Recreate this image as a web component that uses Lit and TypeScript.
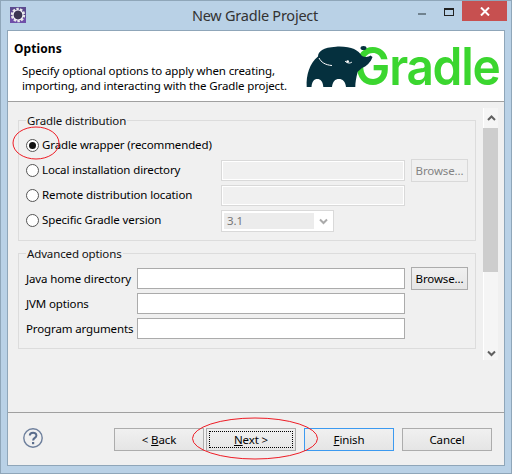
import { LitElement, html, css, svg } from "lit";
import { customElement } from "lit/decorators.js";

@customElement("app-root")
export class AppRoot extends LitElement {
  static styles = css`
    :host { display: block; width: 512px; height: 474px; font-family: "Noto Sans", "Open Sans", sans-serif; font-size: 11.5px; letter-spacing: -0.13px; color: #000; }
    * { box-sizing: border-box; }
    .window { position: relative; width: 512px; height: 474px; background: #b9d1e6; border: 1px solid #8fa6b9; padding: 0 6px 7px; display: flex; flex-direction: column; }
    .titlebar { height: 29px; flex: none; display: flex; align-items: flex-start; position: relative; }
    .appicon { width: 16px; height: 16px; margin: 6px 0 0 3px; flex: none; }
    .title { position: absolute; left: 0; right: 2px; top: 4px; text-align: center; font-size: 14.5px; line-height: 20px; color: #333; letter-spacing: -0.24px; }
    .controls { margin-left: auto; display: flex; align-items: flex-start; margin-right: -2px; }
    .min { width: 8px; height: 2px; background: #70828f; margin: 12px 18px 0 0; }
    .max { width: 10px; height: 8px; border: 1px solid #222; border-top-width: 2px; margin: 7px 8px 0 0; }
    .close { width: 45px; height: 20px; background: #c75050; display: flex; align-items: center; justify-content: center; }
    .client { flex: 1; min-height: 0; background: #f0f0f0; border: 1px solid #8fa6b9; display: flex; flex-direction: column; }
    .header { height: 71px; flex: none; background: #fff; border-bottom: 1px solid #a0a0a0; display: flex; justify-content: space-between; }
    .htext { padding: 9px 0 0 6px; }
    .htitle { font-weight: 700; line-height: 17px; font-size: 12px; letter-spacing: 0.1px; }
    .hdesc { margin: 6px 0 0 8px; line-height: 15px; white-space: nowrap; }
    .logo { position: relative; width: 200px; flex: none; }
    .elephant { position: absolute; left: 0; top: 0; width: 200px; height: 70px; }
    .gradle { position: absolute; right: 5px; top: 6px; font-family: "Inter", sans-serif; font-weight: 600; font-size: 52px; line-height: 60px; letter-spacing: -1.4px; color: #3bd62f; transform: scaleX(0.92); transform-origin: right center; }
    .main { flex: 1; min-height: 0; display: flex; }
    .content { flex: 1; padding: 11px 7px 0 10px; }
    fieldset { margin: 0 0 5px; padding: 5px 7px 7px; border: 1px solid #dcdcdc; min-width: 0; }
    legend { padding: 0 1px; line-height: 15px; color: #111; }
    .grid { display: grid; grid-auto-rows: 25px; align-items: center; }
    .g1 { grid-template-columns: 195px 184px 6px 57px; }
    .g2 { grid-template-columns: 111px 268px 6px 57px; }
    .radio { display: flex; align-items: center; gap: 3px; grid-column: 1; white-space: nowrap; }
    .radio .t { margin-bottom: 2px; }
    .dot { width: 13px; height: 13px; border-radius: 50%; border: 1px solid #555; background: #fff; display: flex; align-items: center; justify-content: center; flex: none; }
    .dot.on i { width: 7px; height: 7px; border-radius: 50%; background: #111; }
    .dis { height: 21px; border: 1px solid #d9d9d9; box-shadow: inset 0 0 0 1px #fff; background: #f0f0f0; }
    .en { height: 21px; border: 1px solid #ababab; background: #fff; }
    .label { white-space: nowrap; }
    .combo { grid-column: 2; width: 113px; height: 22px; border: 1px solid #d9d9d9; background: #fff; padding: 2px; display: flex; }
    .combo span { width: 90px; background: #ececec; color: #777; padding-left: 3px; line-height: 16px; }
    .combo svg { margin: 5px 0 0 5px; }
    .btn { height: 23px; border: 1px solid #acacac; background: linear-gradient(#f0f0f0, #e5e5e5); display: flex; align-items: center; justify-content: center; line-height: 15px; position: relative; white-space: pre; }
    .btn.off { background: #f0f0f0; border-color: #d9d9d9; color: #838383; }
    .scroll { width: 15px; height: 252px; margin: 6px 6px 0 0; flex: none; background: #f5f5f5; border-left: 1px solid #fff; display: flex; flex-direction: column; align-items: center; }
    .scroll svg { flex: none; }
    .up { margin-top: 7px; }
    .down { margin-top: 78px; }
    .thumb { width: 15px; height: 144px; background: #cdcdcd; margin: 6px 0 0 -1px; flex: none; }
    .footer { height: 53px; flex: none; border-top: 1px solid #a0a0a0; display: flex; padding: 15px 11px 0 15px; }
    .help { width: 20px; height: 20px; flex: none; margin-right: 71px; }
    .btns { display: flex; }
    .btns .btn { width: 90px; margin-right: 8px; }
    .btns .back { margin-right: 2px; }
    .btns .cancel { margin-right: 0; }
    .btns .finish { border-color: #3c9af0; }
    .btns .next::after { content: ""; position: absolute; inset: 2px; border: 1px dotted #000; }
    .overlay { position: absolute; left: -1px; top: -1px; width: 512px; height: 474px; pointer-events: none; }
  `;

  render() {
    const chev = (up: boolean, c = "#606060") => svg`<path d=${up ? "M1 5 L4.5 1.5 L8 5" : "M1 1.5 L4.5 5 L8 1.5"} fill="none" stroke=${c} stroke-width="2"/>`;
    return html`
      <div class="window">
        <div class="titlebar">
          <svg class="appicon" viewBox="0 0 16 16">
            <rect width="16" height="16" fill="#5c4a8f"/>
            <rect y="11" width="16" height="5" fill="#6f4fa8"/>
            <circle cx="8" cy="8" r="6" fill="none" stroke="#e8e8e8" stroke-width="2.4" stroke-dasharray="2.4 1.3"/>
            <circle cx="8" cy="8" r="5" fill="none" stroke="#f2f2f2" stroke-width="1.2"/>
            <circle cx="8" cy="8" r="4.2" fill="#3b3550"/>
          </svg>
          <div class="title">New Gradle Project</div>
          <div class="controls">
            <div class="min"></div>
            <div class="max"></div>
            <div class="close">
              <svg width="10" height="9" viewBox="0 0 10 9"><path d="M1 .5 L9 8.5 M9 .5 L1 8.5" stroke="#fff" stroke-width="2"/></svg>
            </div>
          </div>
        </div>
        <div class="client">
          <div class="header">
            <div class="htext">
              <div class="htitle">Options</div>
              <div class="hdesc">Specify optional options to apply when creating,<br>importing, and interacting with the Gradle project.</div>
            </div>
            <div class="logo">
              <div class="gradle">Gradle</div>
              <svg class="elephant" viewBox="304 31 200 70">
                <path fill="#05303e" d="M306.7 87 C306 75 309.5 63.5 318 56.5 C318 51.5 323 47.3 336 46.7 C351 46 358 50 362 56 C365 57.5 369 57 370.5 55.5 L372.5 57 C371 62 366 66.7 362 68 L357.7 71.7 C356 78 355.3 83 355.3 87 L346 87 C345.5 81.5 342.5 79 339 79 C335 79 332.7 81.5 332 87 L323.3 87 C323 81.5 320.5 79 317.3 79 C314 79 312 81.5 311.5 87 Z"/>
                <ellipse fill="#05303e" cx="363.5" cy="48" rx="3" ry="2"/>
                <path fill="none" stroke="#fff" stroke-width="1" d="M319 58 C321 62 325 65 332 65.5"/>
                <path fill="none" stroke="#fff" stroke-width="1" d="M345 61 C347.5 63.5 350 63.5 352 62"/>
                <circle cx="347.7" cy="61.5" r="1.3" fill="#fff"/>
              </svg>
            </div>
          </div>
          <div class="main">
            <div class="content">
              <fieldset>
                <legend>Gradle distribution</legend>
                <div class="grid g1">
                  <div class="radio"><span class="dot on"><i></i></span><span class="t">Gradle wrapper (recommended)</span></div>
                  <div></div><div></div><div></div>
                  <div class="radio"><span class="dot"></span><span class="t">Local installation directory</span></div>
                  <div class="dis"></div><div></div><div class="btn off">Browse...</div>
                  <div class="radio"><span class="dot"></span><span class="t">Remote distribution location</span></div>
                  <div class="dis"></div><div></div><div></div>
                  <div class="radio"><span class="dot"></span><span class="t">Specific Gradle version</span></div>
                  <div class="combo"><span>3.1</span><svg width="9" height="7" viewBox="0 0 9 7">${chev(false, "#aaa")}</svg></div>
                </div>
              </fieldset>
              <fieldset>
                <legend>Advanced options</legend>
                <div class="grid g2">
                  <div class="label">Java home directory</div>
                  <div class="en"></div><div></div><div class="btn">Browse...</div>
                  <div class="label">JVM options</div>
                  <div class="en"></div><div></div><div></div>
                  <div class="label">Program arguments</div>
                  <div class="en"></div><div></div><div></div>
                </div>
              </fieldset>
            </div>
            <div class="scroll">
              <svg class="up" width="9" height="7" viewBox="0 0 9 7">${chev(true)}</svg>
              <div class="thumb"></div>
              <svg class="down" width="9" height="7" viewBox="0 0 9 7">${chev(false)}</svg>
            </div>
          </div>
          <div class="footer">
            <svg class="help" viewBox="0 0 20 20">
              <circle cx="10" cy="10" r="9.2" fill="none" stroke="#6d7f9c" stroke-width="1.4"/>
              <path d="M6.8 7.6 C6.8 3.8 13.4 3.8 13.4 7.5 C13.4 10 10.1 9.8 10.1 12.5" fill="none" stroke="#5a6d8c" stroke-width="2"/>
              <rect x="9" y="14" width="2.2" height="2.2" fill="#5a6d8c"/>
            </svg>
            <div class="btns">
              <div class="btn back">&lt; <u>B</u>ack</div>
              <div class="btn next"><u>N</u>ext &gt;</div>
              <div class="btn finish"><u>F</u>inish</div>
              <div class="btn cancel">Cancel</div>
            </div>
          </div>
        </div>
        <svg class="overlay" viewBox="0 0 512 474">
          <ellipse cx="36" cy="143" rx="23" ry="16" fill="none" stroke="#ee1c25" stroke-width="1"/>
          <ellipse cx="255" cy="438.5" rx="62.5" ry="20.5" fill="none" stroke="#ee1c25" stroke-width="1"/>
        </svg>
      </div>
    `;
  }
}
